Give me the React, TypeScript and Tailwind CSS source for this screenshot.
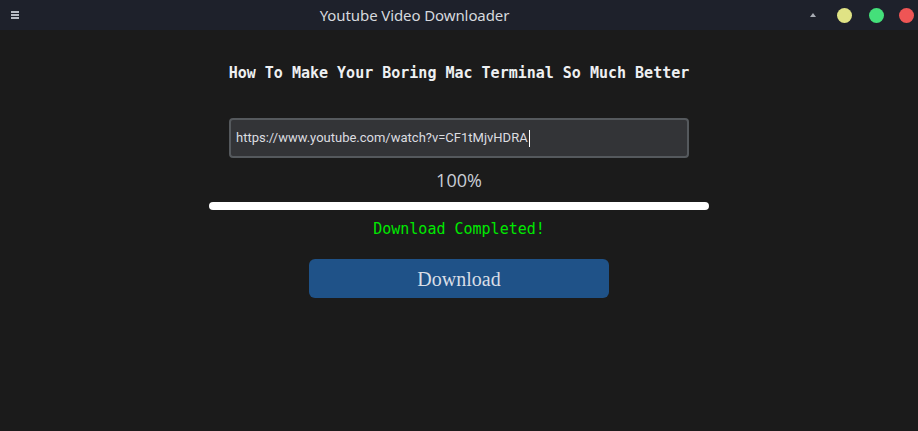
export default function App() {
	return (
		<div className="flex h-[431px] w-[918px] flex-col bg-[#1b1b1b]">
			<div className="relative flex h-[30px] shrink-0 items-center bg-[#1e212b] px-[11px]">
				<div className="flex w-[8px] flex-col gap-[1px]">
					<span className="h-[2px] bg-[#b8bcc4]" />
					<span className="h-[2px] bg-[#b8bcc4]" />
					<span className="h-[2px] bg-[#b8bcc4]" />
				</div>
				<div className="flex-1 text-center font-['Noto_Sans',sans-serif] text-[15px] tracking-[-0.1px] text-[#d6d9de]">
					Youtube Video Downloader
				</div>
				<div className="flex items-center">
					<span className="mr-[21px] h-0 w-0 border-x-[3.5px] border-b-[4px] border-x-transparent border-b-[#a8acb4]" />
					<span className="h-[15px] w-[15px] rounded-full bg-[#e0e385]" />
					<span className="ml-[17px] h-[15px] w-[15px] rounded-full bg-[#44e07a]" />
					<span className="ml-[15px] mr-[-7px] h-[15px] w-[15px] rounded-full bg-[#ef5555]" />
				</div>
			</div>
			<div className="flex flex-col items-center pt-[33px]">
				<h1 className="font-['DejaVu_Sans_Mono',monospace] text-[15px] font-bold leading-[20px] text-[#eef0f2]">
					How To Make Your Boring Mac Terminal So Much Better
				</h1>
				<div className="mt-[35px] flex h-[40px] w-[460px] items-center rounded-[4px] border-2 border-[#55595d] bg-[#333437] px-[5px]">
					<span className="font-['Roboto',sans-serif] text-[13px] text-[#dcdde0]">
						https://www.youtube.com/watch?v=CF1tMjvHDRA
					</span>
					<span className="ml-[1px] h-[17px] w-[1.5px] bg-white" />
				</div>
				<div className="mt-[10px] font-['Open_Sans',sans-serif] text-[18px] leading-[24px] text-[#c9ced6]">
					100%
				</div>
				<div className="mt-[10px] h-[8px] w-[500px] rounded-full bg-white" />
				<div className="mt-[9px] font-['DejaVu_Sans_Mono',monospace] text-[15px] leading-[20px] text-[#00e800]">
					Download Completed!
				</div>
				<button className="mt-[20px] flex h-[39px] w-[300px] items-center justify-center rounded-[6px] bg-[#1f5288] font-['Liberation_Serif',serif] text-[20px] text-[#d9dee6]">
					Download
				</button>
			</div>
		</div>
	);
}
